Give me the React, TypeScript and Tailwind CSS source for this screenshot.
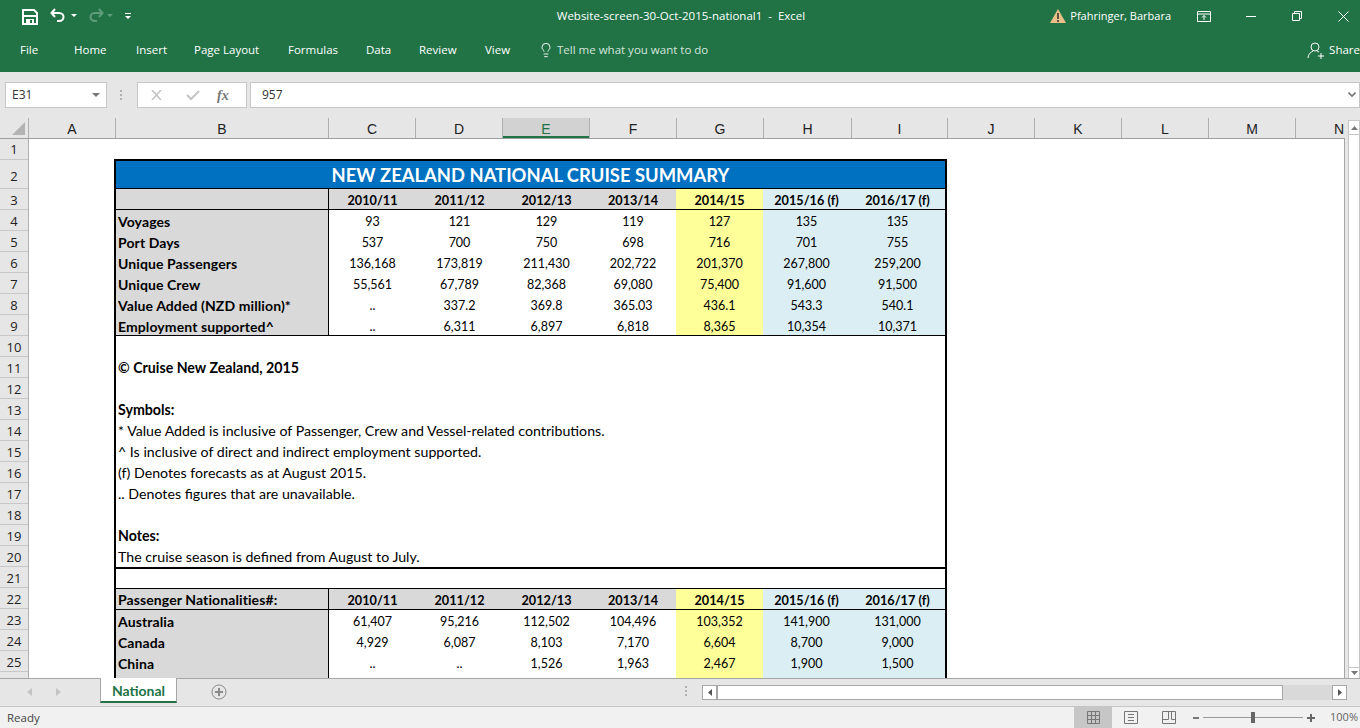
import { Lightbulb } from 'lucide-react';

const SEGOE = "font-['Open_Sans','Noto_Sans',sans-serif]";

const tabs = [
  { label: 'File', w: 'w-[59px] pl-[20px]' },
  { label: 'Home', w: 'w-[62px] pl-[15px]' },
  { label: 'Insert', w: 'w-[58px] pl-[15px]' },
  { label: 'Page Layout', w: 'w-[94px] pl-[15px]' },
  { label: 'Formulas', w: 'w-[78px] pl-[15px]' },
  { label: 'Data', w: 'w-[53px] pl-[15px]' },
  { label: 'Review', w: 'w-[66px] pl-[15px]' },
  { label: 'View', w: 'w-[69px] pl-[15px]' },
];

// column header: letter and width in pixels
const columns = [
  { name: 'A', w: 'w-[87px]' },
  { name: 'B', w: 'w-[213px]' },
  { name: 'C', w: 'w-[87px]' },
  { name: 'D', w: 'w-[87px]' },
  { name: 'E', w: 'w-[87px]', active: true },
  { name: 'F', w: 'w-[87px]' },
  { name: 'G', w: 'w-[87px]' },
  { name: 'H', w: 'w-[88px]' },
  { name: 'I', w: 'w-[96px]' },
  { name: 'J', w: 'w-[87px]' },
  { name: 'K', w: 'w-[87px]' },
  { name: 'L', w: 'w-[87px]' },
  { name: 'M', w: 'w-[87px]' },
  { name: 'N', w: 'w-[87px]' },
];

const years = ['2010/11', '2011/12', '2012/13', '2013/14', '2014/15', '2015/16 (f)', '2016/17 (f)'];

const summary = [
  { label: 'Voyages', values: ['93', '121', '129', '119', '127', '135', '135'] },
  { label: 'Port Days', values: ['537', '700', '750', '698', '716', '701', '755'] },
  { label: 'Unique Passengers', values: ['136,168', '173,819', '211,430', '202,722', '201,370', '267,800', '259,200'] },
  { label: 'Unique Crew', values: ['55,561', '67,789', '82,368', '69,080', '75,400', '91,600', '91,500'] },
  { label: 'Value Added (NZD million)*', values: ['..', '337.2', '369.8', '365.03', '436.1', '543.3', '540.1'] },
  { label: 'Employment supported^', values: ['..', '6,311', '6,897', '6,818', '8,365', '10,354', '10,371'] },
];

const nationalities = [
  { label: 'Australia', values: ['61,407', '95,216', '112,502', '104,496', '103,352', '141,900', '131,000'] },
  { label: 'Canada', values: ['4,929', '6,087', '8,103', '7,170', '6,604', '8,700', '9,000'] },
  { label: 'China', values: ['..', '..', '1,526', '1,963', '2,467', '1,900', '1,500'] },
  { label: '', values: ['', '', '', '', '', '', ''] },
];

const notes = [
  { text: '', bold: false },
  { text: '© Cruise New Zealand, 2015', bold: true },
  { text: '', bold: false },
  { text: 'Symbols:', bold: true },
  { text: '* Value Added is inclusive of Passenger, Crew and Vessel-related contributions.', bold: false },
  { text: '^ Is inclusive of direct and indirect employment supported.', bold: false },
  { text: '(f) Denotes forecasts as at August 2015.', bold: false },
  { text: '.. Denotes figures that are unavailable.', bold: false },
  { text: '', bold: false },
  { text: 'Notes:', bold: true },
  { text: 'The cruise season is defined from August to July.', bold: false },
];

const cellWidths = ['w-[87px]', 'w-[87px]', 'w-[87px]', 'w-[86px]', 'w-[87px]', 'w-[87px]', 'w-[95px]'];
const cellColors = ['', '', '', '', 'bg-[#ffff99]', 'bg-[#daeef3]', 'bg-[#daeef3]'];

const HeaderRow = ({ label }: { label: string }) => (
  <div className="flex h-[21px] border-b border-black font-bold">
    <div className="w-[213px] shrink-0 bg-[#d9d9d9] border-r border-black pl-[2px] text-[14px] tracking-[0.1px] leading-[22px]">{label}</div>
    {years.map((y, i) => (
      <div
        key={y}
        className={`${cellWidths[i]} shrink-0 text-center text-[12.7px] leading-[23px] ${cellColors[i] || 'bg-[#d9d9d9]'}`}
      >
        {y}
      </div>
    ))}
  </div>
);

const DataRow = ({ label, values, last }: { label: string; values: string[]; last?: boolean }) => (
  <div className={`flex h-[21px] ${last ? 'border-b border-black' : ''}`}>
    <div className="w-[213px] shrink-0 bg-[#d9d9d9] border-r border-black pl-[2px] font-bold text-[14px] tracking-[0.1px] leading-[23px]">{label}</div>
    {values.map((v, i) => (
      <div key={i} className={`${cellWidths[i]} shrink-0 text-center text-[12.5px] leading-[24px] ${cellColors[i]}`}>
        {v}
      </div>
    ))}
  </div>
);

const TitleBar = () => (
  <div className="h-[72px] bg-[#217346] text-white shrink-0">
    <div className="flex h-[32px] items-center">
      <svg width="16" height="16" viewBox="0 0 16 16" className="ml-[22px] mt-[1px]">
        <path d="M1 1h11l3 3v11H1z" fill="none" stroke="#fff" strokeWidth="2" />
        <rect x="1" y="6" width="14" height="2" fill="#fff" />
        <rect x="4" y="10" width="8" height="5" fill="#fff" />
        <rect x="8" y="11" width="2" height="3" fill="#217346" />
      </svg>
      <svg width="18" height="16" viewBox="0 0 18 16" className="ml-[12px]">
        <path d="M5 1 1.500 5 5 9" fill="none" stroke="#fff" strokeWidth="2" />
        <path d="M2 5h7c6 0 6 8 0 8H7" fill="none" stroke="#fff" strokeWidth="2" />
      </svg>
      <svg width="6" height="4" viewBox="0 0 6 4" className="ml-[3px]"><path d="M0 0h6L3 3z" fill="#fff" /></svg>
      <svg width="18" height="16" viewBox="0 0 18 16" className="ml-[9px]">
        <path d="M13 1l3.500 4L13 9" fill="none" stroke="#5f9c7c" strokeWidth="2" />
        <path d="M16 5H9c-6 0-6 8 0 8h2" fill="none" stroke="#5f9c7c" strokeWidth="2" />
      </svg>
      <svg width="6" height="4" viewBox="0 0 6 4" className="ml-[3px]"><path d="M0 0h6L3 3z" fill="#5f9c7c" /></svg>
      <svg width="6" height="7" viewBox="0 0 6 7" className="ml-[12px]">
        <path d="M0 0h6v1H0z" fill="#fff" />
        <path d="M0 3h6L3 6z" fill="#fff" />
      </svg>
      <div className={`${SEGOE} absolute left-[1px] w-[1360px] text-center text-[11.5px] pointer-events-none`}>
        <span>Website-screen-30-Oct-2015-national1&nbsp; -&nbsp; Excel</span>
      </div>
      <div className="ml-auto flex items-center">
        <svg width="16" height="14" viewBox="0 0 16 14">
          <path d="M8 0l8 14H0z" fill="#e8c088" />
          <rect x="7" y="4" width="2" height="6" fill="#5c5040" />
          <rect x="7" y="11" width="2" height="2" fill="#5c5040" />
        </svg>
        <span className={`${SEGOE} text-[11px] ml-[4px]`}>Pfahringer, Barbara</span>
        <svg width="14" height="11" viewBox="0 0 14 11" className="ml-[26px]">
          <path d="M.5.5h13v10H.5zM.5 3h13" fill="none" stroke="#fff" />
          <path d="M7 9V4.500M5 6.500l2-2 2 2" fill="none" stroke="#fff" />
        </svg>
        <svg width="10" height="1" viewBox="0 0 10 1" className="ml-[35px]"><path d="M0 0h10v1H0z" fill="#fff" /></svg>
        <svg width="10" height="10" viewBox="0 0 10 10" className="ml-[36px]">
          <path d="M.5 2.500h7v7h-7zM2.500 2.500v-2h7v7h-2" fill="none" stroke="#fff" />
        </svg>
        <svg width="11" height="11" viewBox="0 0 11 11" className="ml-[36px] mr-[11px]">
          <path d="M.5.5l10 10M10.500.5l-10 10" fill="none" stroke="#fff" />
        </svg>
      </div>
    </div>
    <div className={`flex h-[36px] items-center text-[11.5px] ${SEGOE}`}>
      {tabs.map((t) => (
        <div key={t.label} className={`${t.w} shrink-0`}>{t.label}</div>
      ))}
      <Lightbulb size={16} strokeWidth={1.4} className="-ml-px" />
      <span className="ml-[3px] text-[#d5e5dc]">Tell me what you want to do</span>
      <div className="ml-auto flex items-center">
        <svg width="17" height="17" viewBox="0 0 17 17">
          <circle cx="8" cy="5" r="4" fill="none" stroke="#fff" />
          <path d="M1 16c0-4 3-6 5-7M10 9l2 1M11 14h6M14 11v6" fill="none" stroke="#fff" />
        </svg>
        <span className="ml-[5px] whitespace-nowrap">Share</span>
      </div>
    </div>
  </div>
);

const FormulaBar = () => (
  <div className={`h-[36px] bg-[#e6e6e6] shrink-0 flex pt-[10px] items-start ${SEGOE} text-[12px] text-[#333]`}>
    <div className="ml-[5px] w-[102px] h-[26px] bg-white border border-[#c6c6c6] flex items-center pl-[6px]">
      <span>E31</span>
      <svg width="8" height="4" viewBox="0 0 8 4" className="ml-auto mr-[6px]"><path d="M0 0h8L4 4z" fill="#777" /></svg>
    </div>
    <div className="ml-[13px] w-[3px] h-[26px] flex flex-col justify-center gap-[2px]">
      <div className="w-[2px] h-[2px] bg-[#b0b0b0]" />
      <div className="w-[2px] h-[2px] bg-[#b0b0b0]" />
      <div className="w-[2px] h-[2px] bg-[#b0b0b0]" />
    </div>
    <div className="ml-[14px] w-[110px] h-[26px] bg-white border border-[#c6c6c6] flex items-center">
      <svg width="11" height="10" viewBox="0 0 11 10" className="ml-[13px]">
        <path d="M1 0l9 10M10 0 1 10" fill="none" stroke="#c4c4c4" strokeWidth="1.6" />
      </svg>
      <svg width="14" height="11" viewBox="0 0 14 11" className="ml-[24px]">
        <path d="M1 5l4 4 8-8" fill="none" stroke="#c4c4c4" strokeWidth="2" />
      </svg>
      <span className="ml-[17px] font-['Liberation_Serif',serif] italic font-bold text-[14px] text-[#777]">fx</span>
    </div>
    <div className="ml-[3px] flex-1 h-[26px] bg-white border border-[#c6c6c6] flex items-center pl-[11px]">
      <span>957</span>
      <svg width="8" height="6" viewBox="0 0 8 6" className="ml-auto mr-[3px]">
        <path d="M.5.5 4 4 7.500.5" fill="none" stroke="#777" strokeWidth="1.6" />
      </svg>
    </div>
  </div>
);

const ColumnHeaders = () => (
  <div className="h-[21px] flex bg-[#e6e6e6] border-b border-[#9f9f9f] shrink-0 text-[14px] text-[#222] font-['Liberation_Sans',sans-serif] overflow-hidden">
    <div className="w-[29px] shrink-0 relative border-r border-[#b0b0b0]">
      <div className="absolute right-[3px] bottom-[3px] w-0 h-0 border-l-[13px] border-l-transparent border-b-[13px] border-b-[#b4b4b4]" />
    </div>
    {columns.map((c) => (
      <div
        key={c.name}
        className={`${c.w} shrink-0 text-center leading-[22px] border-r border-[#b0b0b0] ${
          c.active ? 'bg-[#d2d2d2] text-[#217346] shadow-[inset_0_-2px_0_#217346]' : ''
        }`}
      >
        {c.name}
      </div>
    ))}
  </div>
);

const Sheet = () => {
  const rowNumbers = Array.from({ length: 25 }, (_, i) => i + 1);
  return (
    <div className="flex-1 flex min-h-0 overflow-hidden border-r border-[#a6a6a6]">
      <div className="w-[29px] shrink-0 bg-[#e6e6e6] border-r border-[#b0b0b0] text-[13px] text-[#222] font-['Open_Sans',sans-serif] overflow-hidden">
        {rowNumbers.map((n) => (
          <div
            key={n}
            className={`flex items-center justify-center border-b border-[#c8c8c8] ${
              n === 2 ? 'h-[29px] pt-[6px]' : n === 1 ? 'h-[21px] pt-[2px]' : 'h-[21px] pt-[4px]'
            }`}
          >
            {n}
          </div>
        ))}
      </div>
      <div className="flex-1 overflow-hidden bg-white pl-[85px] pt-[20px] text-[14.2px] text-black font-['Lato',sans-serif]">
        <div className="w-[833px] border-x-2 border-t-2 border-black">
          <div className="h-[28px] bg-[#0070c0] border-b border-black text-white text-center font-bold text-[18.4px] leading-[29px]">
            NEW ZEALAND NATIONAL CRUISE SUMMARY
          </div>
          <HeaderRow label="" />
          {summary.map((r, i) => (
            <DataRow key={r.label} label={r.label} values={r.values} last={i === summary.length - 1} />
          ))}
          {notes.map((n, i) => (
            <div key={i} className={`h-[21px] pl-[2px] leading-[22px] ${n.bold ? 'font-bold' : ''}`}>{n.text}</div>
          ))}
          <div className="h-[22px] border-t-2 border-b border-black" />
          <HeaderRow label="Passenger Nationalities#:" />
          {nationalities.map((r, i) => (
            <DataRow key={i} label={r.label} values={r.values} />
          ))}
        </div>
      </div>
    </div>
  );
};

const VerticalScroll = () => (
  <div className="w-[15px] shrink-0 bg-[#e6e6e6] pl-[3px] pt-[2px] flex flex-col">
    <div className="h-[15px] bg-white border border-[#c6c6c6] flex items-center justify-center">
      <svg width="7" height="4" viewBox="0 0 7 4"><path d="M0 4h7L3.500 0z" fill="#777" /></svg>
    </div>
    <div className="flex-1 bg-white border-x border-[#c6c6c6]" />
    <div className="h-[11px] bg-white border-x border-t border-[#c6c6c6] flex items-center justify-center">
      <svg width="7" height="4" viewBox="0 0 7 4"><path d="M0 0h7L3.500 4z" fill="#777" /></svg>
    </div>
  </div>
);

const TabStrip = () => (
  <div className="h-[28px] bg-[#e6e6e6] border-t border-[#a6a6a6] shrink-0 flex items-start">
    <svg width="5" height="8" viewBox="0 0 5 8" className="ml-[27px] mt-[9px]"><path d="M5 0v8L0 4z" fill="#c4c4c4" /></svg>
    <svg width="5" height="8" viewBox="0 0 5 8" className="ml-[24px] mt-[9px]"><path d="M0 0v8l5-4z" fill="#c4c4c4" /></svg>
    <div className="ml-[39px] -mt-px w-[77px] h-[25px] bg-white border-x border-[#a6a6a6] border-b-2 border-b-[#217346] text-center text-[#217346] font-bold text-[14px] font-['Lato',sans-serif] leading-[26px]">
      National
    </div>
    <svg width="16" height="16" viewBox="0 0 16 16" className="ml-[34px] mt-[5px]">
      <circle cx="8" cy="8" r="7" fill="none" stroke="#8a8a8a" />
      <path d="M4 8h8M8 4v8" stroke="#8a8a8a" strokeWidth="2" />
    </svg>
    <div className="ml-[458px] mt-[7px] flex flex-col gap-[2px]">
      <div className="w-[2px] h-[2px] bg-[#b0b0b0]" />
      <div className="w-[2px] h-[2px] bg-[#b0b0b0]" />
      <div className="w-[2px] h-[2px] bg-[#b0b0b0]" />
    </div>
    <div className="ml-auto mt-[6px] mr-[13px] flex h-[15px] w-[645px] bg-[#d9d9d9]">
      <div className="w-[15px] bg-white border border-[#a6a6a6] flex items-center justify-center">
        <svg width="4" height="7" viewBox="0 0 4 7"><path d="M4 0v7L0 3.500z" fill="#555" /></svg>
      </div>
      <div className="w-[566px] bg-white border border-[#a6a6a6]" />
      <div className="ml-auto w-[15px] bg-white border border-[#a6a6a6] flex items-center justify-center">
        <svg width="4" height="7" viewBox="0 0 4 7"><path d="M0 0v7l4-3.500z" fill="#555" /></svg>
      </div>
    </div>
  </div>
);

const StatusBar = () => (
  <div className={`h-[22px] bg-[#f1f1f1] border-t border-[#c6c6c6] shrink-0 flex items-center text-[11.5px] text-[#444] ${SEGOE}`}>
    <span className="ml-[7px]">Ready</span>
    <div className="ml-auto flex h-full items-center">
      <div className="w-[38px] h-full bg-[#c6c6c6] flex items-center justify-center">
        <svg width="13" height="13" viewBox="0 0 13 13">
          <path d="M.5.5h12v12H.5zM4.500.5v12M8.500.5v12M.5 4.500h12M.5 8.500h12" fill="none" stroke="#777" />
        </svg>
      </div>
      <svg width="14" height="13" viewBox="0 0 14 13" className="ml-[12px]">
        <path d="M.5.5h13v12H.5z" fill="none" stroke="#777" />
        <path d="M4 3.500h6M4 6.500h6M4 9.500h6" stroke="#777" />
      </svg>
      <svg width="14" height="13" viewBox="0 0 14 13" className="ml-[24px]">
        <path d="M.5.5h13v12H.5zM.5 8.500h6M6.500.5v8M9.500.5v8h4" fill="none" stroke="#777" />
      </svg>
      <div className="ml-[17px] w-[6px] h-[2px] bg-[#777]" />
      <div className="ml-[4px] w-[100px] h-px bg-[#999] relative">
        <div className="absolute left-[48px] -top-[5px] w-[4px] h-[11px] bg-[#666]" />
      </div>
      <svg width="8" height="8" viewBox="0 0 8 8" className="ml-[4px]"><path d="M0 4h8M4 0v8" stroke="#666" strokeWidth="2" /></svg>
      <span className="ml-[15px] mr-[2px] text-[11px] text-[#666] whitespace-nowrap">100%</span>
    </div>
  </div>
);

export default function App() {
  return (
    <div className="relative w-[1360px] h-[728px] flex flex-col overflow-hidden bg-white">
      <TitleBar />
      <FormulaBar />
      <div className="h-[10px] bg-[#e6e6e6] shrink-0" />
      <div className="flex-1 flex min-h-0">
        <div className="flex-1 min-w-0 flex flex-col">
          <ColumnHeaders />
          <Sheet />
        </div>
        <VerticalScroll />
      </div>
      <TabStrip />
      <StatusBar />
    </div>
  );
}
